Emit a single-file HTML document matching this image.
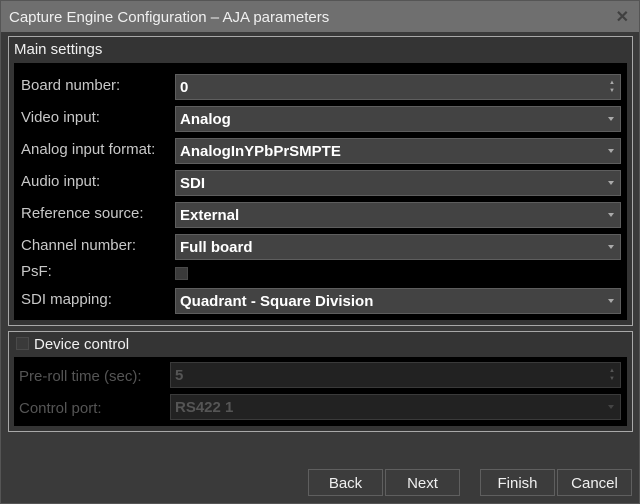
<!DOCTYPE html><html><head><style>
*{box-sizing:border-box;margin:0;padding:0}
body{width:640px;height:504px;background:#3a3a3a;font-family:"Liberation Sans",sans-serif;position:relative;overflow:hidden;color:#e8e8e8}
.a{position:absolute}
.title{left:0;top:0;width:640px;height:32px;background:#6f6f6f;border:1px solid #555;border-bottom:none;font-size:15px;color:#f0f0f0;padding:8px 0 0 8px}
.grp{border:1px solid #a8a8a8;background:#343434}
.blk{background:#000}
.lbl{font-size:15px;color:#c8c8c8;left:21px}
.fld{left:175px;width:446px;height:26px;background:#434343;border:1px solid #5e5e5e;font-size:15px;font-weight:bold;color:#fff;padding:4px 0 0 4px}
.arr{position:absolute;right:6px;top:10px;width:0;height:0;border-left:3px solid transparent;border-right:3px solid transparent;border-top:4px solid #aaa}
.dis{background:#222;border-color:#3a3a3a;color:#555}
.btn{top:469px;width:75px;height:27px;border:1px solid #5f5f5f;background:#3c3c3c;font-size:15px;color:#f0f0f0;text-align:center;padding-top:5px}
.cb{width:13px;height:13px;background:#3a3a3a;border:1px solid #4a4a4a}
</style></head><body>
<div class="a title">Capture Engine Configuration – AJA parameters<span class="a" style="right:10px;top:6px;color:#404040;font-size:16px;font-weight:bold">✕</span></div>
<div class="a" style="left:0;top:32px;width:640px;height:472px;border:1px solid #555;border-top:none"></div>
<div class="a grp" style="left:8px;top:36px;width:625px;height:290px"></div>
<div class="a" style="left:14px;top:41px;font-size:15px;color:#f0f0f0">Main settings</div>
<div class="a blk" style="left:14px;top:63px;width:613px;height:257px"></div>
<div class="a lbl" style="top:77px">Board number:</div>
<div class="a fld" style="top:74px">0<span class="a" style="right:5px;top:4px;font-size:6px;color:#aaa;line-height:8px">▲<br>▼</span></div>
<div class="a lbl" style="top:109px">Video input:</div>
<div class="a fld" style="top:106px">Analog<i class="arr"></i></div>
<div class="a lbl" style="top:141px">Analog input format:</div>
<div class="a fld" style="top:138px">AnalogInYPbPrSMPTE<i class="arr"></i></div>
<div class="a lbl" style="top:173px">Audio input:</div>
<div class="a fld" style="top:170px">SDI<i class="arr"></i></div>
<div class="a lbl" style="top:205px">Reference source:</div>
<div class="a fld" style="top:202px">External<i class="arr"></i></div>
<div class="a lbl" style="top:237px">Channel number:</div>
<div class="a fld" style="top:234px">Full board<i class="arr"></i></div>
<div class="a lbl" style="top:263px">PsF:</div>
<div class="a cb" style="left:175px;top:267px"></div>
<div class="a lbl" style="top:291px">SDI mapping:</div>
<div class="a fld" style="top:288px">Quadrant - Square Division<i class="arr"></i></div>
<div class="a grp" style="left:8px;top:331px;width:625px;height:101px"></div>
<div class="a cb" style="left:16px;top:337px"></div>
<div class="a" style="left:34px;top:336px;font-size:15px;color:#f0f0f0">Device control</div>
<div class="a blk" style="left:14px;top:357px;width:613px;height:69px"></div>
<div class="a lbl" style="left:19px;top:368px;color:#555">Pre-roll time (sec):</div>
<div class="a fld dis" style="left:170px;width:451px;top:362px">5<span class="a" style="right:5px;top:4px;font-size:6px;color:#555;line-height:8px">▲<br>▼</span></div>
<div class="a lbl" style="left:19px;top:400px;color:#555">Control port:</div>
<div class="a fld dis" style="left:170px;width:451px;top:394px">RS422 1<i class="arr" style="border-top-color:#444"></i></div>
<div class="a btn" style="left:308px">Back</div>
<div class="a btn" style="left:385px">Next</div>
<div class="a btn" style="left:480px">Finish</div>
<div class="a btn" style="left:557px">Cancel</div>
</body></html>
